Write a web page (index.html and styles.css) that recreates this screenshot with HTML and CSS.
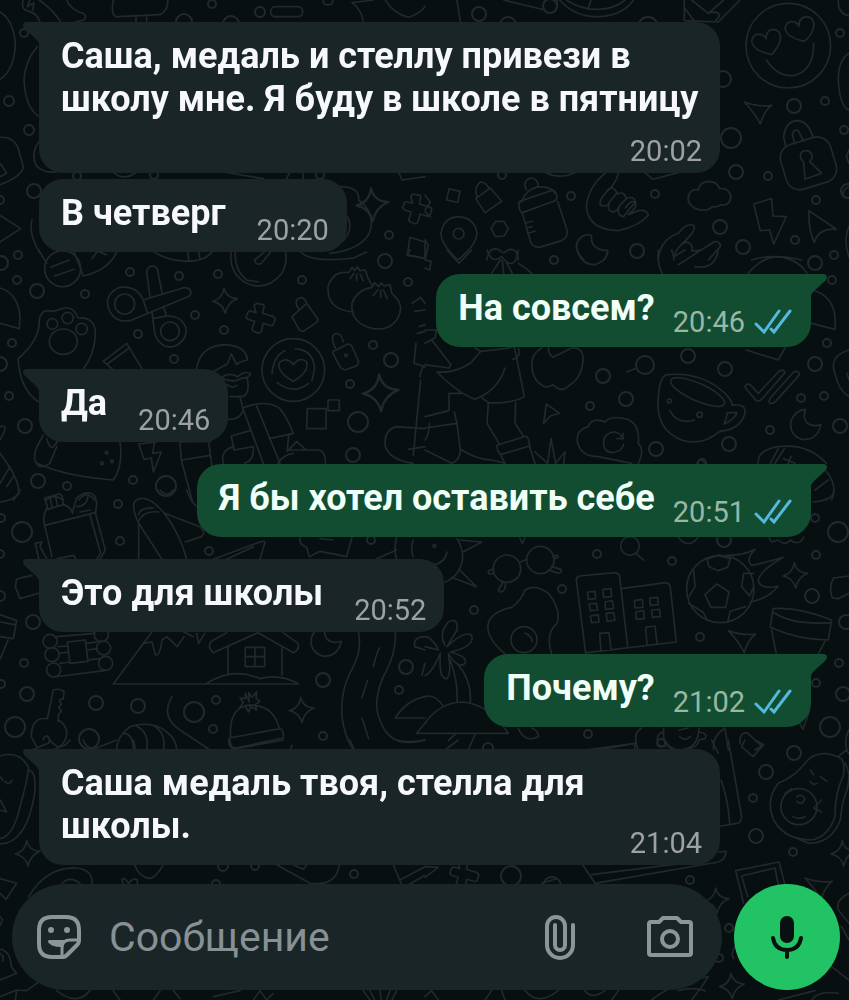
FILE: index.html
```
<!DOCTYPE html>
<html lang="ru">

<head>
    <meta charset="UTF-8">
    <meta name="viewport" content="width=device-width, initial-scale=1.0">
    <title>Чат</title>

    <link rel="stylesheet" href="styles.css">
</head>

<body>
    <!-- wallpaper doodles, drawn in tiles at 3x -->
    <svg class="wallpaper" viewBox="0 0 849 1000" preserveAspectRatio="xMidYMin slice" aria-hidden="true">
        <defs>
            <path id="star" d="M-4-38Q2-8 36-6Q6 6 0 38Q-8 8-38 2Q-8-6-4-38Z" />
            <path id="cross" d="M-12-46L8-42Q12-40 10-34L6-16L38-6Q46-2 42 6L38 18Q34 22 28 20L8 14L2 38Q-2 46-10 42L-22 38Q-28 34-24 26L-18 8L-38 2Q-46-2-42-10L-38-20Q-34-24-28-22L-14-18L-20-40Z" />
            <path id="arrow" d="M-42-32Q0-16 40-22Q16-4 6 34Q-8 4-42-32Z" />
            <path id="moon" d="M12-46Q-20-44-32-10Q-38 30 0 44Q46 50 58 0Q32 8 16-6Q2-20 12-46Z" />
            <path id="bolt" d="M-46-50L8-66L12-14L52-12L14 70L2 28L-26 30Z" />
            <path id="tag" d="M-38 8L6-32L40 16Q40 24 32 28L-4 52Q-12 52-16 48Z M-16-14Q-32-30-22-44Q-10-54 0-44L10-26" />
        </defs>

        <g class="rings">
            <circle cx="212" cy="4" r="4" /><circle cx="260" cy="12" r="5" /><circle cx="184" cy="22" r="8" />
            <circle cx="231" cy="24" r="8" /><circle cx="328" cy="0" r="5" /><circle cx="9" cy="101" r="5" />
            <circle cx="29" cy="130" r="5" /><circle cx="34" cy="191" r="7" /><circle cx="0" cy="200" r="4" />
            <circle cx="24" cy="33" r="4" /><circle cx="77" cy="176" r="4" /><circle cx="154" cy="175" r="4" />
            <circle cx="320" cy="175" r="4" /><circle cx="389" cy="235" r="4" /><circle cx="479" cy="14" r="7" />
            <circle cx="508" cy="25" r="8" /><circle cx="550" cy="6" r="7" /><circle cx="648" cy="27" r="10" />
            <circle cx="723" cy="79" r="8" /><circle cx="794" cy="106" r="7" /><circle cx="825" cy="101" r="4" />
            <circle cx="731" cy="138" r="10" /><circle cx="736" cy="172" r="7" /><circle cx="768" cy="176" r="4" />
            <circle cx="840" cy="33" r="4" /><circle cx="844" cy="130" r="4" /><circle cx="816" cy="200" r="4" />
            <circle cx="720" cy="227" r="7" /><circle cx="743" cy="247" r="7" /><circle cx="637" cy="251" r="7" />
            <circle cx="655" cy="194" r="4" /><circle cx="571" cy="196" r="4" /><circle cx="795" cy="240" r="4" />
            <circle cx="834" cy="255" r="4" /><circle cx="502" cy="175" r="4" /><circle cx="848" cy="191" r="7" />
            <circle cx="1" cy="263" r="7" /><circle cx="18" cy="255" r="4" /><circle cx="17" cy="280" r="4" />
            <circle cx="37" cy="291" r="7" /><circle cx="85" cy="294" r="4" /><circle cx="130" cy="272" r="4" />
            <circle cx="179" cy="276" r="4" /><circle cx="218" cy="274" r="4" /><circle cx="302" cy="280" r="4" />
            <circle cx="385" cy="261" r="7" /><circle cx="408" cy="282" r="4" /><circle cx="195" cy="315" r="4" />
            <circle cx="224" cy="330" r="4" /><circle cx="138" cy="334" r="4" /><circle cx="12" cy="343" r="4" />
            <circle cx="0" cy="364" r="7" /><circle cx="174" cy="359" r="4" /><circle cx="9" cy="396" r="4" />
            <circle cx="25" cy="426" r="7" /><circle cx="38" cy="481" r="7" /><circle cx="67" cy="486" r="4" />
            <circle cx="133" cy="480" r="4" /><circle cx="166" cy="486" r="10" /><circle cx="373" cy="345" r="4" />
            <circle cx="391" cy="360" r="7" /><circle cx="350" cy="384" r="4" /><circle cx="358" cy="422" r="10" />
            <circle cx="353" cy="455" r="7" /><circle cx="554" cy="260" r="4" /><circle cx="815" cy="263" r="7" />
            <circle cx="832" cy="280" r="4" /><circle cx="827" cy="343" r="4" /><circle cx="815" cy="364" r="7" />
            <circle cx="688" cy="356" r="7" /><circle cx="725" cy="369" r="7" /><circle cx="645" cy="365" r="9" />
            <circle cx="603" cy="376" r="7" /><circle cx="626" cy="399" r="7" /><circle cx="590" cy="406" r="4" />
            <circle cx="656" cy="449" r="7" /><circle cx="729" cy="444" r="7" /><circle cx="770" cy="430" r="4" />
            <circle cx="801" cy="398" r="4" /><circle cx="824" cy="396" r="4" /><circle cx="840" cy="426" r="7" />
            <circle cx="702" cy="463" r="4" /><circle cx="22" cy="532" r="10" /><circle cx="118" cy="504" r="4" />
            <circle cx="120" cy="541" r="4" /><circle cx="209" cy="551" r="4" /><circle cx="1" cy="518" r="4" />
            <circle cx="0" cy="554" r="4" /><circle cx="0" cy="596" r="5" /><circle cx="33" cy="622" r="7" />
            <circle cx="24" cy="663" r="4" /><circle cx="1" cy="684" r="4" /><circle cx="27" cy="694" r="7" />
            <circle cx="15" cy="727" r="10" /><circle cx="96" cy="703" r="7" /><circle cx="138" cy="706" r="7" />
            <circle cx="194" cy="712" r="10" /><circle cx="216" cy="700" r="4" /><circle cx="213" cy="729" r="4" />
            <circle cx="89" cy="739" r="10" /><circle cx="323" cy="680" r="7" /><circle cx="323" cy="736" r="4" />
            <circle cx="371" cy="540" r="4" /><circle cx="406" cy="667" r="7" /><circle cx="399" cy="690" r="4" />
            <circle cx="597" cy="554" r="4" /><circle cx="672" cy="561" r="4" /><circle cx="562" cy="589" r="4" />
            <circle cx="474" cy="610" r="4" /><circle cx="815" cy="518" r="4" /><circle cx="838" cy="532" r="10" />
            <circle cx="816" cy="555" r="4" /><circle cx="812" cy="596" r="7" /><circle cx="700" cy="637" r="4" />
            <circle cx="846" cy="622" r="7" /><circle cx="839" cy="663" r="4" /><circle cx="816" cy="683" r="4" />
            <circle cx="843" cy="694" r="7" /><circle cx="830" cy="727" r="10" /><circle cx="588" cy="734" r="4" />
            <circle cx="488" cy="748" r="5" /><circle cx="724" cy="540" r="7" /><circle cx="255" cy="866" r="4" />
            <circle cx="354" cy="874" r="4" /><circle cx="223" cy="866" r="5" /><circle cx="216" cy="884" r="4" />
            <circle cx="794" cy="753" r="7" /><circle cx="766" cy="772" r="7" /><circle cx="753" cy="798" r="4" />
            <circle cx="756" cy="836" r="7" /><circle cx="793" cy="852" r="4" /><circle cx="511" cy="876" r="10" />
            <circle cx="690" cy="880" r="4" /><circle cx="729" cy="928" r="4" /><circle cx="719" cy="958" r="4" />
            <circle cx="552" cy="886" r="9" /><circle cx="661" cy="743" r="4" />
        </g>

        <g class="doodles" transform="scale(.3333)">
            <!-- broom, table, pill, planet -->
            <path d="M70 0Q60 30 90 35Q110 40 120 65M90 0L82 20L102 8L98 30M118 0Q160 30 182 66M200 0Q212 30 250 40Q262 50 252 60L225 66" />
            <path d="M340 0Q330 54 356 50L480 44Q506 30 503 0M408 50V66M440 48V66" />
            <rect x="812" y="20" width="96" height="30" rx="14" />
            <path d="M1056 8L1120 0M1056 8Q1086 30 1090 66M1156 0Q1180 40 1226 52Q1260 40 1275 20" />
            <path d="M0 36Q40 60 46 130Q44 210 0 238M112 140Q76 180 72 240Q76 320 114 348M116 426Q92 460 108 496Q130 520 170 516" />
            <path d="M0 412Q44 410 56 450L70 500Q66 530 0 554M0 490L20 520L0 530M0 646L62 686L0 726" />
            <path d="M340 516Q370 546 410 516M670 516L790 536M860 536L870 516M910 536L908 516" />
            <path d="M1020 560Q1080 560 1076 600Q1130 640 1108 700Q1080 750 990 760M1036 640Q1070 690 1020 730M96 660Q84 700 120 760" />
            <use href="#star" x="1122" y="614" transform="translate(-340 -184) scale(1.3)" />
            <use href="#cross" x="1252" y="628" />
            <path d="M1230 712L1275 726V774L1222 766ZM1196 516L1206 540L1275 530" />
        </g>

        <g class="doodles" transform="translate(425 0) scale(.3333)">
            <!-- clock, pencil -->
            <path d="M404 0Q450 52 520 50Q590 48 626 0M424 0Q470 30 520 28Q570 26 600 0M490 24L498 0M236 0L360 30M396 0Q400 24 388 34M96 0L106 66" />
            <path d="M778 0V62L880 66L945 0M780 26L806 60M800 0L850 40Q880 30 884 48L872 62M850 40L896 0" />
            <!-- heart-eyes face -->
            <circle cx="1090" cy="137" r="127" />
            <path d="M1040 163Q988 156 980 124Q984 98 1010 104Q1020 108 1024 116Q1022 92 1044 88Q1070 90 1066 120Q1060 144 1040 163ZM1138 124Q1084 112 1080 84Q1086 60 1110 66Q1120 72 1122 80Q1120 54 1144 50Q1170 52 1166 82Q1160 106 1138 124Z" />
            <path d="M1024 180Q1060 234 1110 226Q1168 208 1166 130M1272 160Q1240 180 1240 240Q1244 320 1272 330M1240 0Q1238 40 1272 48" />
            <use href="#arrow" x="1000" y="338" />
            <!-- padlock -->
            <path d="M1082 438L1076 410Q1082 362 1120 362Q1150 366 1164 410M1110 432L1102 404Q1106 386 1120 392L1136 424" />
            <rect x="-78" y="-72" width="156" height="140" rx="42" transform="translate(1151 492) rotate(-17)" />
            <path d="M1136 486Q1118 468 1132 454Q1154 446 1162 466Q1162 480 1154 484L1190 520L1140 538Z" />
            <!-- bottle, pin, hands, cloud, bolt -->
            <rect x="68" y="570" width="34" height="34" transform="rotate(12 85 587)" />
            <path d="M152 596L196 564L230 604L180 638ZM156 592Q146 560 166 546Q184 546 192 566" />
            <path d="M304 570Q292 542 316 534Q340 534 340 562M290 606Q300 570 340 560Q380 560 390 580M282 616Q280 604 290 602L384 570Q394 574 396 592Q394 602 386 604L292 638Q282 634 282 616ZM292 640L318 730Q330 746 350 740L410 722Q430 712 426 690L398 604M300 670L322 664M304 684L322 680M308 700L330 694" />
            <path d="M98 780Q46 730 48 700Q56 652 100 650Q150 654 156 700Q152 740 98 780Z" />
            <circle cx="101" cy="701" r="16" />
            <path d="M198 686L212 664L236 664L250 686L238 708L212 710ZM0 586L16 606L0 630M0 636L16 650M0 720L10 736L0 780M186 780Q190 740 220 748Q236 766 248 750Q276 740 280 780" />
            <path d="M540 520Q490 560 484 620Q490 690 580 692Q640 680 670 646Q666 628 640 632L610 644Q640 620 630 606Q614 600 602 624M580 520Q574 548 548 572Q520 600 526 616Q546 622 552 610Q546 636 568 636Q578 630 582 622Q574 648 596 650L612 630M552 608L576 578Q560 550 544 576M582 620L604 596Q598 572 576 582M610 630L632 606Q626 586 604 596" />
            <path d="M812 626Q782 610 792 584Q800 566 820 570Q824 546 850 544Q876 544 884 566Q912 562 918 590Q914 620 886 614Q880 622 862 620Q844 638 812 626Z" />
            <path d="M700 780Q704 720 760 700Q784 668 806 676Q812 690 796 706L770 734M746 780Q750 740 784 726Q806 730 800 752L826 752L866 726Q886 720 886 740L850 780" />
            <path d="M476 780Q440 740 464 716Q480 700 500 706Q494 750 548 752Q546 770 536 780M980 780Q1040 760 1130 780M360 516Q400 540 450 518M660 518L684 538L760 518" />
            <use href="#bolt" x="1032" y="662" />
            <path d="M1152 632L1234 688Q1180 684 1168 728Q1150 690 1152 632ZM1272 680Q1254 720 1272 770M1272 450L1264 470L1272 490M1272 560Q1250 570 1256 590" />
        </g>

        <g class="doodles" transform="translate(0 250) scale(.3333)">
            <!-- life ring, stopwatch -->
            <circle cx="188" cy="56" r="54" />
            <path d="M152 52L208 30M164 78L222 58M116 0L140 40M220 0L250 78Q330 60 352 0M276 26L292 4L320 14M456 0Q490 30 560 34Q620 34 640 0M564 6L566 30M596 6L600 26" />
            <path d="M694 0Q684 70 740 100Q800 126 846 70Q866 30 854 0M706 6Q702 60 740 90L776 96M764 30L800 0M784 40L812 6M764 30Q768 48 784 40M900 4Q930 40 1060 24L1100 6M1230 0L1222 14L1275 26" />
            <!-- scissors -->
            <circle cx="374" cy="162" r="30" /><circle cx="510" cy="244" r="28" />
            <path d="M430 150Q410 106 360 112Q316 130 324 170Q340 220 390 212L560 142Q576 136 572 122Q564 110 548 114L430 150L442 188M450 140L440 66Q444 46 462 48Q474 54 474 66L486 128M456 186L464 250Q480 296 520 290Q562 274 558 234Q544 196 500 198L490 170M458 206L500 198" />
            <!-- paw -->
            <circle cx="203" cy="204" r="17" /><circle cx="157" cy="222" r="16" /><circle cx="245" cy="237" r="17" />
            <ellipse cx="190" cy="275" rx="42" ry="38" />
            <path d="M54 326Q120 270 118 210Q124 174 160 184Q176 180 184 176Q220 164 234 204Q290 200 286 260Q280 320 250 356M54 326Q60 420 116 456M0 114Q54 130 60 200L58 236L0 220M310 334L380 280L426 356M310 334L336 356M322 342L388 294" />
            <use href="#star" x="676" y="152" /><use href="#cross" x="782" y="206" /><use href="#tag" x="914" y="192" />
            <!-- dumplings -->
            <path d="M1060 186Q980 180 984 110Q1000 60 1046 68L1056 52L1064 62L1072 50L1080 62L1096 60L1104 84L1118 110M1116 112L1124 98L1136 110L1144 98L1152 108L1170 104L1176 130Q1210 160 1200 190Q1180 244 1120 236Q1050 220 1056 160Q1070 120 1116 112M1050 86L1062 70M1070 92L1070 72M1090 92L1080 72M1120 136L1134 120M1142 142L1142 120M1162 146L1150 120M1236 160L1262 142L1275 160M1244 184L1275 180" />
            <!-- coin with heart -->
            <circle cx="880" cy="360" r="94" />
            <path d="M880 394Q830 366 838 338Q860 318 880 344Q900 318 920 336Q928 366 880 394ZM886 296Q940 300 944 356L936 392M854 302Q820 320 816 372M832 398Q880 436 926 400" />
            <path d="M1000 304L1044 282Q1052 282 1056 290L1076 334Q1076 346 1064 350L1034 360Q1024 358 1020 350L998 308ZM1006 294Q990 264 1004 252Q1024 246 1030 276M1258 230L1275 224M1252 250L1275 244M1248 280L1242 340L1275 350M1262 390L1240 616" />
            <circle cx="1038" cy="316" r="4" />
            <!-- boy with glasses and backpack -->
            <path d="M590 356Q600 286 680 284Q740 290 742 330L720 336L710 344L694 312L682 342L630 370M664 384Q684 364 714 380Q734 360 752 372Q748 384 722 386Q704 400 664 384ZM742 386Q752 440 720 440L690 440M682 404Q696 418 710 406M720 440L730 480Q720 510 684 508M728 474L790 640M728 474Q800 446 840 476Q860 500 880 550L808 566M770 468L840 640M634 574L540 576M694 558L702 600L760 590Q764 630 734 640M694 558L750 542M702 590Q660 600 670 640M866 556L862 600L960 600Q978 610 976 640M862 604L890 574L918 600M834 640Q850 614 880 610M540 576L544 630L576 750M544 630L632 616M626 574L636 650" />
            <use href="#star" x="1092" y="330" transform="translate(-440 -50) scale(1.45)" />
            <path d="M984 450H1018V482H984ZM922 476H978V536H920ZM1275 536L1190 530Q1150 540 1156 590Q1170 630 1240 640M1275 590L1226 598M1260 380Q1264 350 1275 350" />
            <!-- taco, pizza -->
            <path d="M130 556Q90 620 110 640Q200 680 340 690Q370 650 360 576M160 590Q180 566 170 576M110 640Q120 660 150 640L170 590M140 566Q150 600 160 590M0 530Q30 520 0 570M0 610Q60 690 56 730L40 750M0 700L30 650M20 710L40 680M140 750Q160 730 190 750M236 750Q260 720 284 750M490 730" />
            <circle cx="320" cy="608" r="4" /><circle cx="306" cy="640" r="4" /><circle cx="336" cy="634" r="4" />
            <path d="M416 582L470 576M416 582L432 628L454 624L460 666L484 606L458 610L464 576" />
        </g>

        <g class="doodles" transform="translate(425 250) scale(.3333)">
            <path d="M0 30L18 34L14 60L0 54M66 0L102 40L140 0M186 0Q200 44 230 20Q270 70 280 0M226 30L200 70M232 30L236 70M240 30L262 70M280 40L304 56L320 70M456 0Q470 46 510 44Q550 30 548 0M700 0Q696 40 712 70M740 0L746 20L780 0M760 44Q800 20 826 0M880 0Q870 60 810 50M966 74Q1010 20 1060 20Q1120 28 1146 70M1160 120Q1240 140 1230 238L1160 220M964 300L1060 330L1080 294M1272 300Q1210 320 1230 370Q1240 420 1272 440" />
            <!-- walking legs -->
            <path d="M0 240L34 240L30 264L0 280M20 270L78 344L72 354L0 344M150 294L166 304L240 296L268 290L298 440Q260 462 190 458L172 444M136 340L166 306M240 354Q220 420 150 448Q100 430 36 366Q90 370 136 340M280 294Q290 320 264 328M72 430V482L0 500M72 430L110 430M0 534L96 520L88 486M96 520L106 600Q106 630 80 640L0 600M14 520Q10 560 0 570M190 458L186 520L222 580M272 458L270 520L296 560M216 586L304 558Q314 570 314 588L226 614Q214 600 216 586ZM110 600Q160 630 200 630L240 640L226 614M314 590L330 640M330 606L368 640L378 566L392 640L420 606L416 640" />
            <!-- apple -->
            <path d="M350 294Q320 310 320 346Q324 400 366 412L384 404Q410 430 430 408Q476 380 474 320Q470 290 440 294L384 322Q370 310 370 294" />
            <path d="M604 366L630 356M364 462L404 490L376 498L356 520Z" />
            <!-- cup -->
            <path d="M700 440Q704 380 726 374Q830 364 900 430Q920 450 922 466Q964 460 960 490Q946 540 884 544Q830 590 770 570Q690 540 700 440Z" />
            <ellipse cx="818" cy="426" rx="88" ry="26" transform="rotate(24 818 426)" />
            <path d="M734 482Q760 526 808 510M908 488L936 488Q930 506 898 522Z" />
            <circle cx="733" cy="453" r="6" /><circle cx="824" cy="494" r="8" />
            <!-- double check, moon, cloud -->
            <path d="M960 412Q964 398 976 404L1000 430L1060 366Q1076 354 1080 368L1010 448Q1000 458 990 448ZM1036 444L1106 366Q1122 360 1124 374L1052 454Q1036 468 1032 454Z" />
            <use href="#moon" x="1130" y="524" />
            <path d="M640 640Q660 600 640 580Q646 510 590 504Q550 500 540 516Q500 500 490 530Q450 540 458 580Q470 620 520 620L620 640M594 564Q570 530 540 560Q526 600 560 608Q590 606 596 584M594 550V566L576 566M816 640Q826 620 840 640M1000 640Q996 600 1060 590Q1150 580 1204 640M1036 640L1060 596M1050 640L1078 596M1076 626L1110 640M1098 620L1086 650M1204 664Q1240 710 1220 750M1170 720L1210 690M1272 390L1266 370" />
        </g>

        <g class="doodles" transform="translate(0 490) scale(.3333)">
            <path d="M0 36Q50 30 60 0M480 0Q500 24 520 0M560 0Q574 40 594 52" />
            <!-- bag with bottle -->
            <path d="M134 24L176 12Q186 12 188 24L190 44L144 58ZM150 20L156 50M166 16L172 46M140 56Q126 80 134 106L156 200M134 106L286 68L316 180L300 208M190 44Q212 50 218 70M218 66L230 24Q260 0 280 14Q296 30 286 68M230 50Q260 50 264 20M240 66L270 60M270 76L302 190L290 208M106 160L126 156L120 170L140 206M106 160L116 206M172 206L222 196L226 206" />
            <!-- pencil -->
            <path d="M414 96Q390 40 410 30Q440 10 490 66Q540 130 560 208M414 96L486 208M416 74Q420 52 462 54M414 96Q430 60 476 66M416 104V208M494 70L600 110Q620 130 604 140L556 156M640 208L780 156Q796 150 794 160L780 208M680 208L760 170" />
            <path d="M900 142Q896 164 920 172L928 200L960 184L1040 200L1056 142M960 146L1000 150M1130 206L1190 180M1190 142Q1180 180 1190 208M1240 150Q1230 180 1240 200" />
            <path d="M46 290L50 268L70 262L96 256M46 290L60 326L116 310M0 374L50 392L40 446L0 440M0 396L44 404M24 450L0 508" />
            <!-- firewood -->
            <circle cx="150" cy="454" r="21" /><circle cx="156" cy="494" r="21" /><circle cx="161" cy="540" r="21" />
            <circle cx="304" cy="434" r="21" /><circle cx="311" cy="474" r="21" /><circle cx="317" cy="520" r="21" />
            <path d="M170 440L284 430M174 470L202 468M260 460L290 456M178 490L206 486M260 480L292 476M180 520L210 516M264 510L300 506M162 561L318 541M202 456L256 450L264 514L210 520Z" />
            <!-- mountain and house -->
            <path d="M454 428L340 582H896Q840 550 780 566Q700 530 620 580M454 428L430 460L456 456L466 494Q480 500 486 450L500 440L532 470L552 440M552 426L580 440M590 430L596 460L614 430M774 428L640 488Q620 470 634 454L680 428M774 428L880 488Q900 480 894 460L850 428M684 470V550M846 470V556M736 472H794V530H736ZM765 472V530M736 500H794" />
            <use href="#moon" x="966" y="454" />
            <path d="M1076 428Q1086 480 1060 530Q1020 600 1026 680Q1034 740 1060 780M1186 428Q1190 490 1150 560Q1116 640 1140 690Q1170 780 1275 750M1138 474Q1128 496 1120 530M1102 572L1086 624M1086 684L1106 746M1275 440Q1240 440 1244 470L1275 480M1275 620Q1220 630 1186 684H1275M1275 700L1250 730H1275M1275 520L1266 556" />
            <!-- key -->
            <path d="M142 686L160 600Q176 594 192 604L190 626L178 630L184 644L176 652L184 664L176 672L174 694M142 686Q94 680 94 740L110 770M174 690Q210 710 196 750Q180 780 150 780M130 750Q130 738 142 738Q152 746 146 760L134 764L96 780" />
            <!-- croissant, hat -->
            <path d="M350 780Q350 740 390 710Q460 690 500 726Q530 750 530 780M370 730Q400 730 400 780M410 708Q450 730 440 780M460 706Q500 730 490 780M516 620Q480 680 540 720L630 780" />
            <path d="M692 740Q686 660 740 646Q820 640 838 716M688 744L840 716Q852 720 850 744L700 776Q682 770 688 744ZM748 636L746 608L756 622L770 606L768 626L780 634L766 644L770 660L752 650L746 666L736 648L718 654L730 638L720 624L736 626L736 610Z" />
            <use href="#star" x="906" y="660" />
        </g>

        <g class="doodles" transform="translate(425 490) scale(.3333)">
            <!-- sun, glasses, magnifier -->
            <path d="M104 150L170 156L114 186M104 240L154 290L80 262M96 146Q130 200 96 250Q80 270 60 276M66 186Q60 220 20 226M284 144L292 160L300 144" />
            <circle cx="28" cy="168" r="4" />
            <circle cx="246" cy="236" r="41" /><circle cx="346" cy="210" r="41" />
            <path d="M286 216L306 208M206 238Q184 240 192 252L208 250M234 276L220 300Q228 314 240 296L242 278M384 200Q400 190 400 202L388 206M380 230L408 238Q412 252 394 248L370 240" />
            <circle cx="615" cy="168" r="28" />
            <path d="M632 190L656 210M760 142Q790 180 820 142M1032 142L1040 156L1060 150Q1080 170 1096 150Q1120 170 1136 142M1164 36Q1230 30 1226 0" />
            <!-- fried egg -->
            <path d="M240 492Q180 440 190 400Q200 366 260 352Q290 330 300 300Q330 280 370 310Q410 360 396 400Q360 430 380 492" />
            <circle cx="297" cy="449" r="39" />
            <path d="M300 430Q320 436 322 456" />
            <!-- buildings -->
            <path d="M482 490L454 270Q454 260 464 258L570 248Q582 250 584 260L608 470M590 296L722 278Q734 280 736 292L754 456L486 488M488 306L510 304L512 326L490 328ZM534 298L558 296L560 320L536 322ZM492 342L514 340L518 360L496 362ZM540 336L562 332L566 356L542 358ZM496 378L520 374L522 396L500 398ZM544 370L566 368L570 390L546 394ZM628 332L652 328L654 352L630 354ZM674 324L698 322L700 344L676 346ZM632 366L656 362L658 386L634 388ZM680 360L704 358L706 380L682 382ZM528 484L524 430L552 428L558 480M666 464L662 412L690 408L696 460" />
            <!-- football -->
            <circle cx="886" cy="297" r="101" />
            <path d="M876 282L912 306L902 352H858L840 314ZM846 208L880 196L916 206L908 232L880 242L852 230ZM986 250L956 250L950 290L974 318L986 290M962 350L916 364L908 396M790 340L834 366L846 390M806 240L810 290L792 320M906 196Q960 196 990 178Q960 210 980 226Q1030 216 1074 202Q1000 246 1000 274Q1010 300 1060 288Q1030 326 976 336" />
            <use href="#star" x="1112" y="256" /><use href="#arrow" x="952" y="454" />
            <path d="M1044 356Q1120 350 1220 390L1210 450Q1120 450 1036 412ZM1044 366Q1100 406 1220 398M1040 420L1054 492M1200 454L1180 492M1272 258L1226 264Q1210 290 1222 324L1240 326L1272 310" />
            <!-- palm and island -->
            <path d="M60 466Q40 430 70 396Q100 380 96 420L66 470Q120 420 140 436Q150 470 76 486Q130 500 120 520Q100 540 70 490Q80 550 66 566Q40 570 46 490Q20 550 0 556M40 480Q20 440 0 440M0 470L40 480M76 510Q100 580 96 634M96 520Q140 570 136 636M0 620Q30 610 56 650M0 700Q40 640 110 636Q190 640 250 730H0M70 752L92 732M150 734L130 780M280 716Q300 760 340 740Q340 720 320 714" />
            <path d="M480 780L630 760M640 780Q620 730 650 714M716 716Q710 780 760 780Q820 780 822 716M716 726Q690 730 700 766L720 770M822 726Q850 730 840 746L824 750M762 720L790 714M764 740Q780 756 796 740M866 780Q860 740 900 714L910 780M946 762Q940 730 966 728L1010 768L990 780M1124 700L1134 718L1154 660M1272 720Q1256 750 1266 780" />
        </g>

        <g class="doodles" transform="translate(0 740) scale(.3333)">
            <path d="M150 0Q180 40 210 0M250 0Q260 30 290 24L350 0M400 0Q410 30 400 28M690 0Q690 30 720 24L850 0M876 16L870 30M1050 0L1062 28M1190 0Q1220 10 1275 0" />
            <path d="M0 48Q60 30 86 84Q80 130 60 200Q40 290 0 296M84 90Q110 90 104 160Q80 310 0 312M0 110L8 120M14 124Q30 136 36 120M0 180L20 216L0 210" />
            <use href="#star" x="84" y="340" />
            <path d="M0 416L50 430L18 478L0 460M0 530L8 540L0 556M86 470Q140 380 230 384Q280 390 276 432M186 430Q210 406 240 430M370 432Q360 410 376 418L386 430Q400 410 412 420V432M404 374Q416 410 450 416Q470 410 490 374M830 374L930 430Q1010 440 1018 374M880 374L910 388L920 374M1180 374L1204 432M1200 420L1275 380M1230 432L1275 406" />
            <path d="M0 628Q30 630 34 680L50 700L0 720M0 640Q14 650 8 664M0 770L50 750L80 752L116 726M50 750L46 780M170 752Q230 800 270 752M340 752L360 780M460 780L480 752M520 752L540 776M640 770L720 752M760 780L780 752L800 780L820 760M1090 752L1110 780M1110 752L1124 780M1140 752L1144 780M1170 752L1160 780M1190 752L1176 780" />
        </g>

        <g class="doodles" transform="translate(425 740) scale(.3333)">
            <path d="M60 30L100 0M530 28L630 10V28M720 0Q740 40 790 28Q820 20 822 0M860 0Q870 20 880 40M910 0L950 230Q950 246 936 250L888 258M888 120Q910 180 914 250M950 20L984 50L1016 14L990 0M950 20L960 0" />
            <!-- avocado -->
            <path d="M1250 56Q1180 20 1140 70Q1110 110 1060 130Q1020 180 1046 240Q1080 300 1160 300Q1210 290 1230 230Q1230 160 1254 110Q1262 80 1250 56ZM1260 70Q1280 100 1266 150Q1250 190 1246 240Q1220 310 1150 310L1080 280M1240 50L1264 30L1272 40" />
            <circle cx="1122" cy="200" r="54" />
            <path d="M1156 90L1166 104M1156 124Q1164 138 1176 130M1186 110L1206 124M1116 170Q1130 160 1140 176Q1130 200 1116 184M1104 230Q1120 240 1140 230M1080 160L1100 146M1166 204L1190 180M1170 206L1190 216" />
            <use href="#star" x="1256" y="340" />
            <path d="M0 380L40 382L0 412M474 376L510 430L880 366Q900 360 904 334L880 336M500 404L820 364M932 392L1062 366L1080 434M932 392L956 490M950 408L1050 384L1060 434M950 408L968 470M350 430L390 418" />
            <use href="#cross" x="118" y="404" /><use href="#star" x="876" y="482" /><use href="#arrow" x="1182" y="446" />
            <path d="M1272 460Q1230 480 1240 510L1272 550M1250 560L1272 600M930 620Q916 640 926 656" />
            <use href="#star" x="922" y="738" />
            <path d="M0 770L20 752L40 780M180 780L200 752M230 752L240 780M300 752Q340 800 400 752M560 780L580 752M680 780Q740 730 850 710L830 740L800 780M760 752Q800 740 840 752M1060 780L1170 752M1160 780Q1180 750 1240 760M1220 680L1272 720M480 752Q500 780 540 752" />
        </g>
    </svg>

    <main>
        <div class="message in tail stacked">
            <p>Саша, медаль и стеллу привези в школу мне. Я буду в школе в пятницу</p>
            <time>20:02</time>
        </div>
        <div class="message in follow">
            <p>В четверг</p>
            <time>20:20</time>
        </div>
        <div class="message out tail">
            <p>На совсем?</p>
            <time>20:46</time>
            <svg class="ticks" viewBox="0 0 38 26" role="img" aria-label="Прочитано">
                <path d="M2 15L10 23L25 2M17 20L20 23L36 2" />
            </svg>
        </div>
        <div class="message in tail">
            <p>Да</p>
            <time>20:46</time>
        </div>
        <div class="message out tail">
            <p>Я бы хотел оставить себе</p>
            <time>20:51</time>
            <svg class="ticks" viewBox="0 0 38 26" role="img" aria-label="Прочитано">
                <path d="M2 15L10 23L25 2M17 20L20 23L36 2" />
            </svg>
        </div>
        <div class="message in tail">
            <p>Это для школы</p>
            <time>20:52</time>
        </div>
        <div class="message out tail">
            <p>Почему?</p>
            <time>21:02</time>
            <svg class="ticks" viewBox="0 0 38 26" role="img" aria-label="Прочитано">
                <path d="M2 15L10 23L25 2M17 20L20 23L36 2" />
            </svg>
        </div>
        <div class="message in tail">
            <p>Саша медаль твоя, стелла для школы.</p>
            <time>21:04</time>
        </div>
    </main>

    <footer>
        <div class="compose">
            <button type="button" aria-label="Стикеры">
                <svg class="icon" viewBox="0 0 46 46">
                    <path class="line" d="M16 3H30Q43 3 43 16V27Q43 29 41 31L31 41Q29 43 27 43H16Q3 43 3 30V16Q3 3 16 3Z" />
                    <path class="line thin" d="M26 42V34Q26 26 34 26H42" />
                    <circle cx="15" cy="16" r="3" />
                    <circle cx="31" cy="16" r="3" />
                    <path d="M13 26H31Q27 28 25 33Q15 33 12 28Q12 26 13 26Z" />
                </svg>
            </button>
            <input type="text" placeholder="Сообщение" aria-label="Сообщение">
            <button type="button" aria-label="Прикрепить">
                <svg class="icon clip" viewBox="0 0 30 46">
                    <path class="line" d="M28 11V31A13 13 0 0 1 2 31V12A9 9 0 0 1 20 12V31A5 5 0 0 1 10 31V11" />
                </svg>
            </button>
            <button type="button" aria-label="Камера">
                <svg class="icon" viewBox="0 0 46 46">
                    <path class="line" d="M4 8H12L16 4H30L34 8H42Q44 8 44 10V39Q44 41 42 41H4Q2 41 2 39V10Q2 8 4 8Z" />
                    <circle class="line" cx="23" cy="25" r="8" />
                </svg>
            </button>
        </div>
        <button class="mic" type="button" aria-label="Голосовое сообщение">
            <svg viewBox="0 0 32 44">
                <rect x="9" y="1" width="14" height="27" rx="7" />
                <path d="M2 23Q4 35 16 35Q28 35 30 23M16 35V42" />
            </svg>
        </button>
    </footer>
</body>

</html>
```

FILE: styles.css
```
* {
    box-sizing: border-box;
    margin: 0;
    padding: 0;
}

body {
    min-height: 100vh;
    display: flex;
    flex-direction: column;
    background: #070f10;
    font-family: Roboto, "Noto Sans", sans-serif;
}

.wallpaper {
    position: fixed;
    top: 0;
    left: 0;
    width: 100%;
    height: 100%;
    z-index: -1;
    fill: none;
    stroke: #22292c;
    stroke-linejoin: round;
    stroke-linecap: round;
}

.rings {
    stroke-width: 2;
}

.doodles {
    stroke-width: 5;
}

main {
    flex: 1;
    display: flex;
    flex-direction: column;
    align-items: flex-start;
    padding: 22px 38px 19px 39px;
}

.message {
    position: relative;
    display: flex;
    align-items: flex-end;
    max-width: calc(100% - 91px);
    margin-top: 22px;
    padding: 13px 18px 5px 22px;
    border-radius: 24px;
    font-size: 36px;
    line-height: 43px;
}

.message:first-child {
    margin-top: 0;
}

.message p {
    padding-bottom: 12px;
    font-weight: bold;
    color: #f7f8fc;
}

.message time {
    margin-left: 31px;
    font-size: 29px;
    line-height: 34px;
    color: #9da1a3;
}

.message.follow {
    margin-top: 6px;
}

.message.stacked p {
    padding-bottom: 13px;
}

.stacked {
    flex-direction: column;
}

.in {
    background: #1a2528;
}

.message.out {
    align-self: flex-end;
    padding-right: 19px;
    padding-bottom: 8px;
    background: #134d31;
}

.out p {
    padding-bottom: 9px;
    color: #f0fff8;
}

.message.out p {
    padding-bottom: 9px;
}

.message.out time {
    margin-left: 18px;
    color: #98b8a6;
}

.in.tail {
    border-top-left-radius: 0;
}

.out.tail {
    border-top-right-radius: 0;
}

.tail::before {
    content: "";
    position: absolute;
    top: 0;
    left: -16px;
    width: 17px;
    height: 24px;
    background: inherit;
    clip-path: path("M0 3Q0 0 4 0H17V24Q16 20 13 17L2 7Q0 5 0 3Z");
}

.out.tail::before {
    left: auto;
    right: -16px;
    transform: scaleX(-1);
}

.ticks {
    width: 38px;
    height: 26px;
    margin: 0 0 4px 9px;
    fill: none;
    stroke: #55b8dc;
    stroke-width: 3;
    stroke-linecap: round;
}

footer {
    display: flex;
    gap: 12px;
    padding: 0 9px 10px 12px;
}

button {
    border: 0;
    background: none;
    cursor: pointer;
}

button svg {
    display: block;
}

.compose {
    flex: 1;
    min-width: 0;
    height: 106px;
    display: flex;
    align-items: center;
    padding: 0 29px 0 24px;
    border-radius: 53px;
    background: #1a2528;
}

.compose input {
    flex: 1;
    min-width: 0;
    margin-left: 27px;
    border: 0;
    outline: 0;
    background: none;
    color: #f7f8fc;
    font-family: inherit;
    font-size: 41px;
}

.compose input::placeholder {
    color: #879194;
    opacity: 1;
}

.icon {
    width: 46px;
    height: 46px;
    fill: #8a9698;
}

.icon .line {
    fill: none;
    stroke: #8a9698;
    stroke-width: 4;
    stroke-linecap: round;
    stroke-linejoin: round;
}

.icon .thin {
    stroke-width: 3;
}

.clip {
    width: 30px;
    margin-right: 72px;
}

.mic {
    width: 106px;
    height: 106px;
    display: grid;
    place-items: center;
    border-radius: 50%;
    background: #22c365;
}

.mic svg {
    width: 32px;
    height: 44px;
    fill: #08110f;
}

.mic path {
    fill: none;
    stroke: #08110f;
    stroke-width: 4;
    stroke-linecap: round;
}
```
